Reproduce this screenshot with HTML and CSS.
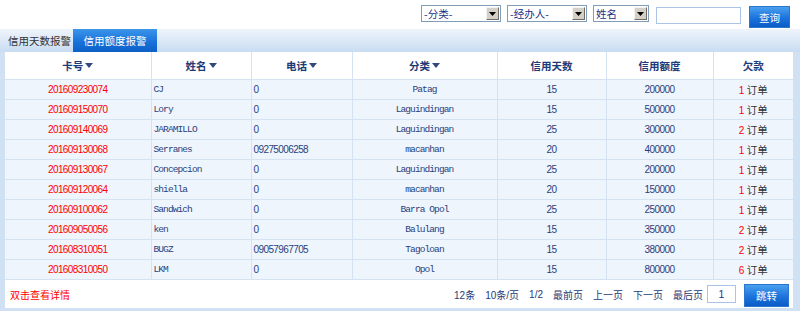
FILE: index.html
```html
<!DOCTYPE html>
<html lang="zh">
<head>
  <meta charset="UTF-8">
  <title>信用额度报警</title>
  <link rel="stylesheet" href="styles.css">
</head>
<body>
  <div class="toolbar">
    <div class="select wide"><span class="val">-分类-</span><span class="arrow"><svg width="7" height="4" viewBox="0 0 7 4"><path d="M0 0H7L3.5 4Z" fill="#000"/></svg></span></div>
    <div class="select wide"><span class="val">-经办人-</span><span class="arrow"><svg width="7" height="4" viewBox="0 0 7 4"><path d="M0 0H7L3.5 4Z" fill="#000"/></svg></span></div>
    <div class="select short"><span class="val">姓名</span><span class="arrow"><svg width="7" height="4" viewBox="0 0 7 4"><path d="M0 0H7L3.5 4Z" fill="#000"/></svg></span></div>
    <input class="search" type="text">
    <button class="btn">查询</button>
  </div>

  <div class="panel">
    <div class="tabs">
      <span class="tab">信用天数报警</span>
      <span class="tab active">信用额度报警</span>
    </div>
    <div class="sheet">
      <table class="grid">
        <colgroup>
          <col style="width:146px"><col style="width:100px"><col style="width:101px">
          <col style="width:145px"><col style="width:109px"><col style="width:107px"><col style="width:80px">
        </colgroup>
        <thead>
          <tr>
            <th>卡号<i class="sort"></i></th>
            <th>姓名<i class="sort"></i></th>
            <th>电话<i class="sort"></i></th>
            <th>分类<i class="sort"></i></th>
            <th>信用天数</th>
            <th>信用额度</th>
            <th>欠款</th>
          </tr>
        </thead>
        <tbody>
          <tr><td class="card">201609230074</td><td class="mono">CJ</td><td class="num left">0</td><td class="mono center">Patag</td><td class="num">15</td><td class="num">200000</td><td class="debt"><b>1</b> 订单</td></tr>
          <tr><td class="card">201609150070</td><td class="mono">Lory</td><td class="num left">0</td><td class="mono center">Laguindingan</td><td class="num">15</td><td class="num">500000</td><td class="debt"><b>1</b> 订单</td></tr>
          <tr><td class="card">201609140069</td><td class="mono">JARAMILLO</td><td class="num left">0</td><td class="mono center">Laguindingan</td><td class="num">25</td><td class="num">300000</td><td class="debt"><b>2</b> 订单</td></tr>
          <tr><td class="card">201609130068</td><td class="mono">Serranes</td><td class="num left">09275006258</td><td class="mono center">macanhan</td><td class="num">20</td><td class="num">400000</td><td class="debt"><b>1</b> 订单</td></tr>
          <tr><td class="card">201609130067</td><td class="mono">Concepcion</td><td class="num left">0</td><td class="mono center">Laguindingan</td><td class="num">25</td><td class="num">200000</td><td class="debt"><b>1</b> 订单</td></tr>
          <tr><td class="card">201609120064</td><td class="mono">shiella</td><td class="num left">0</td><td class="mono center">macanhan</td><td class="num">20</td><td class="num">150000</td><td class="debt"><b>1</b> 订单</td></tr>
          <tr><td class="card">201609100062</td><td class="mono">Sandwich</td><td class="num left">0</td><td class="mono center">Barra Opol</td><td class="num">25</td><td class="num">250000</td><td class="debt"><b>1</b> 订单</td></tr>
          <tr><td class="card">201609050056</td><td class="mono">ken</td><td class="num left">0</td><td class="mono center">Balulang</td><td class="num">15</td><td class="num">350000</td><td class="debt"><b>2</b> 订单</td></tr>
          <tr><td class="card">201608310051</td><td class="mono">BUGZ</td><td class="num left">09057967705</td><td class="mono center">Tagoloan</td><td class="num">15</td><td class="num">380000</td><td class="debt"><b>2</b> 订单</td></tr>
          <tr><td class="card">201608310050</td><td class="mono">LKM</td><td class="num left">0</td><td class="mono center">Opol</td><td class="num">15</td><td class="num">800000</td><td class="debt"><b>6</b> 订单</td></tr>
        </tbody>
      </table>
      <div class="footer">
        <span class="hint">双击查看详情</span>
        <div class="pager">
          <span>12条</span>
          <span>10条/页</span>
          <span>1/2</span>
          <span>最前页</span>
          <span>上一页</span>
          <span>下一页</span>
          <span>最后页</span>
          <input class="page" type="text" value="1">
          <button class="btn jump">跳转</button>
        </div>
      </div>
    </div>
  </div>
</body>
</html>
```

FILE: styles.css
```css
body {
  margin: 0;
  background: #fff;
  font-family: "Liberation Sans", "Noto Sans CJK SC", sans-serif;
  font-size: 10px;
  color: #1e3a78;
}
.toolbar {
  height: 29px;
  display: flex;
  justify-content: flex-end;
  align-items: flex-start;
  padding: 5px 10px 0 0;
  box-sizing: border-box;
}
.select {
  display: flex;
  align-items: center;
  height: 17px;
  box-sizing: border-box;
  border: 1px solid #7f9db9;
  background: #fff;
  margin-right: 6px;
  padding: 0 1px 0 2px;
}
.select.wide { width: 80px; }
.select.short { width: 56px; }
.select .val {
  flex: 1;
  color: #1b2f86;
  font-family: "Noto Sans CJK SC", sans-serif;
  font-size: 10.5px;
  line-height: 15px;
}
.select .arrow {
  width: 13px;
  height: 13px;
  box-sizing: border-box;
  display: flex;
  align-items: center;
  justify-content: center;
  background: #d4d0c8;
  border: 1px solid;
  border-color: #f4f3ef #6f6c66 #6f6c66 #f4f3ef;
}
.search {
  width: 85px;
  height: 17px;
  box-sizing: border-box;
  margin: 2px 8px 0 1px;
  border: 1px solid #a9c4e6;
  padding: 0;
}
.btn {
  width: 41px;
  height: 22px;
  margin-top: 1px;
  border: 1px solid #2b76cf;
  background: linear-gradient(to bottom, #4aa0ee 0%, #1b73dc 55%, #0b5cc6 100%);
  color: #fff;
  font-family: "Noto Sans CJK SC", sans-serif;
  font-size: 10.5px;
  padding: 0;
}
.panel {
  background: linear-gradient(to bottom, #eef4fb 0, #c9dcf2 23px, #d0e1f4 23px);
  padding: 0 7px 3px 5px;
}
.tabs {
  height: 23px;
  display: flex;
  align-items: stretch;
  padding-left: 3px;
}
.tab {
  display: flex;
  align-items: center;
  font-family: "Noto Sans CJK SC", sans-serif;
  font-size: 10.5px;
  color: #333;
  width: 65px;
  white-space: nowrap;
}
.tab.active {
  width: 84px;
  justify-content: center;
  color: #fff;
  background: linear-gradient(to bottom, #3b95ea 0%, #1670d8 60%, #0c60c8 100%);
}
.sheet {
  background: #fff;
}
.grid {
  width: 788px;
  table-layout: fixed;
  border-collapse: collapse;
}
.grid th {
  height: 27px;
  border: 1px solid #d5e2f1;
  border-top: 0;
  font-family: "Noto Sans CJK SC", sans-serif;
  font-size: 10.5px;
  font-weight: bold;
  color: #1b3a78;
  background: #fff;
  padding: 0;
}
.sort {
  display: inline-block;
  width: 0;
  height: 0;
  margin-left: 2px;
  vertical-align: 2px;
  border-left: 4px solid transparent;
  border-right: 4px solid transparent;
  border-top: 5px solid #32487e;
}
.grid td {
  height: 19px;
  padding: 0 2px;
  border: 1px solid #d5e2f1;
  background: #eef5fc;
  color: #2a3f7c;
  text-align: center;
  white-space: nowrap;
  overflow: hidden;
}
.grid tr td:first-child, .grid tr th:first-child { border-left: 0; }
.grid tr td:last-child, .grid tr th:last-child { border-right: 0; }
.card, .num {
  font-family: "Liberation Sans", sans-serif;
  font-size: 10px;
  letter-spacing: -0.6px;
}
.card { color: #f00 !important; }
.mono {
  font-family: "Liberation Mono", monospace;
  font-size: 9.5px;
  letter-spacing: -0.9px;
  text-align: left !important;
}
.mono.center { text-align: center !important; }
.left { text-align: left !important; }
.debt {
  font-family: "Noto Sans CJK SC", sans-serif;
  font-size: 10.5px;
  color: #333 !important;
}
.debt b {
  font-family: "Liberation Sans", sans-serif;
  font-weight: normal;
  font-size: 10px;
  color: #f00;
}
.footer {
  height: 28px;
  display: flex;
  align-items: center;
  justify-content: space-between;
  padding: 0 4px 0 5px;
}
.hint {
  font-family: "Noto Sans CJK SC", sans-serif;
  color: #f00;
}
.pager {
  display: flex;
  align-items: center;
  font-family: "Noto Sans CJK SC", sans-serif;
  color: #1e3a78;
}
.pager span { margin-right: 10px; }
.pager span:nth-child(-n+3) {
  font-family: "Liberation Sans", "Noto Sans CJK SC", sans-serif;
}
.page {
  width: 29px;
  height: 18px;
  box-sizing: border-box;
  border: 1px solid #a9c4e6;
  text-align: center;
  color: #1b2f86;
  font-size: 10.5px;
  padding: 0;
  margin: 0 8px 0 -6px;
}
.btn.jump {
  width: 45px;
  height: 23px;
  margin: 2px 0 0;
}
```
